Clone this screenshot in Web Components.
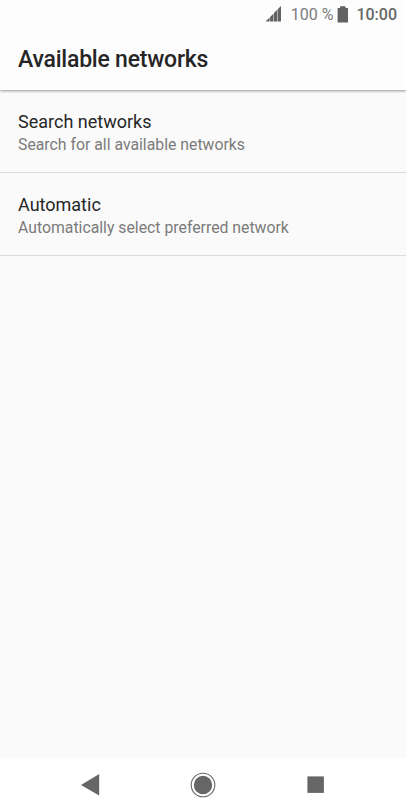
<!DOCTYPE html>
<html lang="en"><head><meta charset="utf-8"><title>Available networks</title>
<style>html,body{margin:0;height:100%}body{font-family:Roboto,sans-serif;background:#fafafa;overflow:hidden}</style></head>
<body><phone-screen></phone-screen>
<script>
const define=(name,html)=>customElements.define(name,class extends HTMLElement{constructor(){super();this.attachShadow({mode:'open'}).innerHTML=html;}});
define('status-bar',`<style>:host{display:flex;height:28px;align-items:center;justify-content:flex-end;padding-right:9px;box-sizing:border-box;font-size:16px;line-height:28px;color:#7c7c7c;white-space:nowrap}svg{display:block;flex:none}span{padding-top:1px}.s{margin-right:9px}.b{margin:0 8px 0 4px}.t{color:#666;font-weight:500}</style>
<svg class="s" width="16" height="16" viewBox="0 0 16 16" fill="#626262"><path d="M-.5 15.500L3.600 11.400v4.100zM4.100 15.500v-4.600L7.500 7.500v8zM8 15.500V7L11.400 3.600v11.900zM11.900 15.500V3.100L15 0v15.500z"/></svg><span>100 %</span><svg class="b" width="11" height="17" viewBox="0 0 11 17" fill="#626262"><path d="M3.100 .2h5.400V2H11v14.500H.6V2h2.500z"/></svg><span class="t">10:00</span>`);
define('title-bar',`<style>:host{display:flex;height:62px;align-items:center;padding:1px 0 0 18px;box-sizing:border-box;font-size:23px;letter-spacing:-.22px;font-weight:500;color:#262626}</style><slot></slot>`);
define('network-option',`<style>:host{display:flex;flex-direction:column;height:83px;box-sizing:border-box;padding:20px 18px 0;border-bottom:1px solid #dcdcdc}.h{font-size:18px;line-height:23px;color:#262626}.d{font-size:15.800px;line-height:23px;color:#7b7b7b}</style><div class="h"><slot name="title"></slot></div><div class="d"><slot></slot></div>`);
define('navigation-bar',`<style>:host{display:flex;height:54px;background:#fff;align-items:center;justify-content:space-between;padding:0 77px;box-sizing:border-box}svg{display:block}</style>
<svg width="26" height="26" viewBox="0 0 26 26" fill="#666"><path d="M4 13L22.200 2v21.500z"/></svg><svg width="26" height="26" viewBox="0 0 26 26" fill="#666"><circle cx="13" cy="13" r="9.200"/><circle cx="13" cy="13" r="11.800" fill="none" stroke="#666" stroke-width="1.100"/></svg><svg width="26" height="26" viewBox="0 0 26 26" fill="#666"><path d="M4.400 4.400h16.500v16.500H4.400z"/></svg>`);
define('phone-screen',`<style>:host{display:flex;flex-direction:column;width:406px;height:812px;background:#fafafa}header{height:90px;background:#fdfdfd;box-shadow:0 1px 2.500px #0006}main{flex:1}</style><header><status-bar></status-bar><title-bar>Available networks</title-bar></header><main><network-option><span slot="title">Search networks</span>Search for all available networks</network-option><network-option><span slot="title">Automatic</span>Automatically select preferred network</network-option></main><navigation-bar></navigation-bar>`);
</script></body></html>
